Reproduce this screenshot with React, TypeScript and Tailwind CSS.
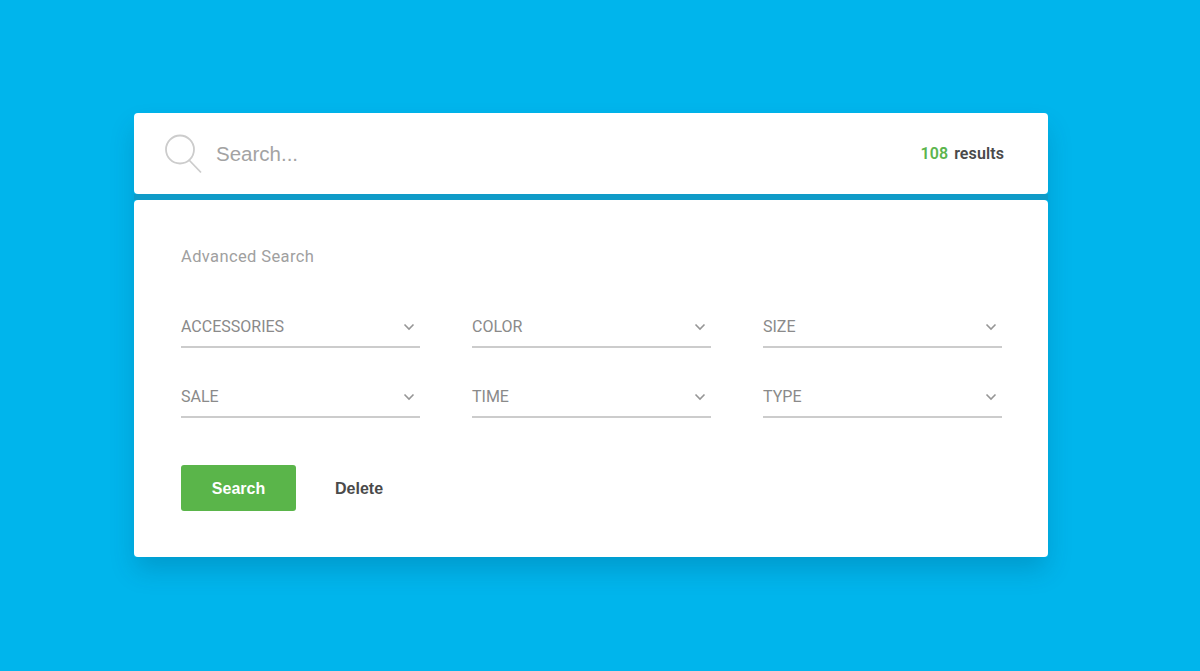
const filters = ["ACCESSORIES", "COLOR", "SIZE", "SALE", "TIME", "TYPE"]

function Chevron() {
  return (
    <svg width="12" height="8" viewBox="0 0 12 8" fill="none" stroke="#969696" strokeWidth="1.6" className="mr-[5px] mt-[1px]">
      <path d="M1.5 1.5 L6 6 L10.5 1.5" />
    </svg>
  )
}

function SearchIcon() {
  return (
    <svg width="40" height="41" viewBox="0 0 40 41" fill="none" stroke="#cccccc" strokeWidth="1.8">
      <circle cx="17" cy="16.5" r="14" />
      <path d="M26 27 L38 39.5" />
    </svg>
  )
}

export default function App() {
  return (
    <div className="min-h-[671px] bg-[#00b5ec] pt-[113px] font-['Roboto',sans-serif]">
      <div className="ml-[134px] w-[914px] shadow-[0_14px_24px_-2px_rgba(0,60,90,0.22)]">
        <div className="flex h-[81px] items-center justify-between rounded-[4px] bg-white pl-[29px] pr-[44px]">
          <div className="flex items-center gap-[13px]">
            <SearchIcon />
            <span className="pt-[2px] font-['Liberation_Sans',sans-serif] text-[20.5px] text-[#a3a3a3]">Search...</span>
          </div>
          <div className="flex gap-[6px] text-[16px] font-semibold tracking-[0.1px]">
            <span className="text-[#5cb54d]">108</span>
            <span className="text-[#4a4a4a]">results</span>
          </div>
        </div>
        <div className="h-[6px] bg-[#0f9bc8]" />
        <div className="h-[357px] rounded-[4px] bg-white pl-[47px] pr-[46px] pt-[47px]">
          <div className="text-[16.5px] leading-[19px] tracking-[0.38px] text-[#a0a0a0]">Advanced Search</div>
          <div className="mt-[37px] grid grid-cols-3 gap-x-[52px] gap-y-[25px]">
            {filters.map((name) => (
              <div key={name} className="flex h-[45px] items-center justify-between border-b-2 border-[#cccccc] pt-[4px]">
                <span className="text-[16px] text-[#8a8a8a]">{name}</span>
                <Chevron />
              </div>
            ))}
          </div>
          <div className="mt-[47px] flex items-center gap-[39px] font-['Liberation_Sans',sans-serif] text-[16px] font-bold">
            <button className="h-[46px] w-[115px] rounded-[3px] bg-[#5ab54a] pt-[1px] text-white">Search</button>
            <button className="pt-[1px] text-[#4a4a4a]">Delete</button>
          </div>
        </div>
      </div>
    </div>
  )
}
